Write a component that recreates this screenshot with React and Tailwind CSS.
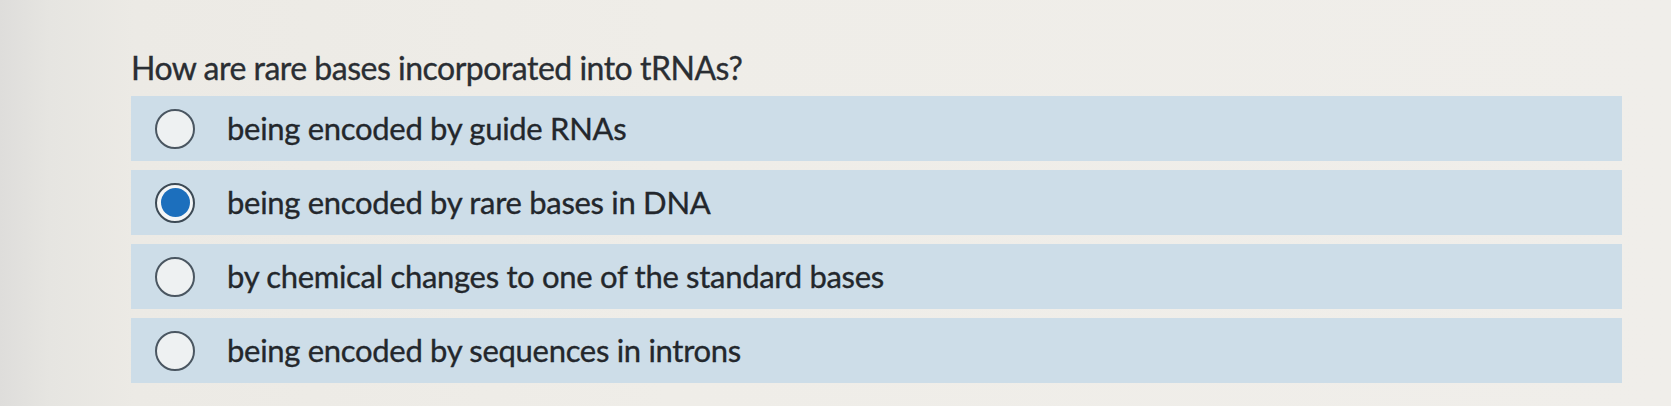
import React from "react";

const options = [
  "being encoded by guide RNAs",
  "being encoded by rare bases in DNA",
  "by chemical changes to one of the standard bases",
  "being encoded by sequences in introns",
];

function Radio({ checked }) {
  if (checked) {
    return (
      <span className="flex h-[40px] w-[40px] shrink-0 items-center justify-center rounded-full border-[2px] border-[#3d4a55] bg-[#f4f6f7]">
        <span className="h-[29px] w-[29px] rounded-full bg-[#1c6fbd]" />
      </span>
    );
  }
  return (
    <span className="h-[40px] w-[40px] shrink-0 rounded-full border-[2.5px] border-[#4a5661] bg-[#eef1f2]" />
  );
}

export default function App() {
  return (
    <div
      className="h-[406px] w-[1671px] overflow-hidden bg-[linear-gradient(90deg,#dedddb_0%,#e6e5e1_3%,#eceae5_8%,#efede8_40%,#f0eeea_100%)]"
      style={{ fontFamily: "Lato, 'Noto Sans', sans-serif" }}
    >
      <div className="pl-[131px] pt-[48px] pr-[49px]">
        <h1 className="text-[32px] leading-[40px] font-normal text-[#2a2e33] tracking-[-0.5px] [-webkit-text-stroke:0.35px_#2a2e33]">
          How are rare bases incorporated into tRNAs?
        </h1>
        <div className="mt-[8px] flex flex-col gap-[9px]">
          {options.map((o, i) => (
            <div
              key={o}
              className="flex h-[65px] items-center bg-[#cddde8] pl-[24px]"
            >
              <Radio checked={i === 1} />
              <span className="ml-[32px] text-[31px] leading-none text-[#23272c] tracking-[-0.3px] [-webkit-text-stroke:0.35px_#23272c]">
                {o}
              </span>
            </div>
          ))}
        </div>
      </div>
    </div>
  );
}
